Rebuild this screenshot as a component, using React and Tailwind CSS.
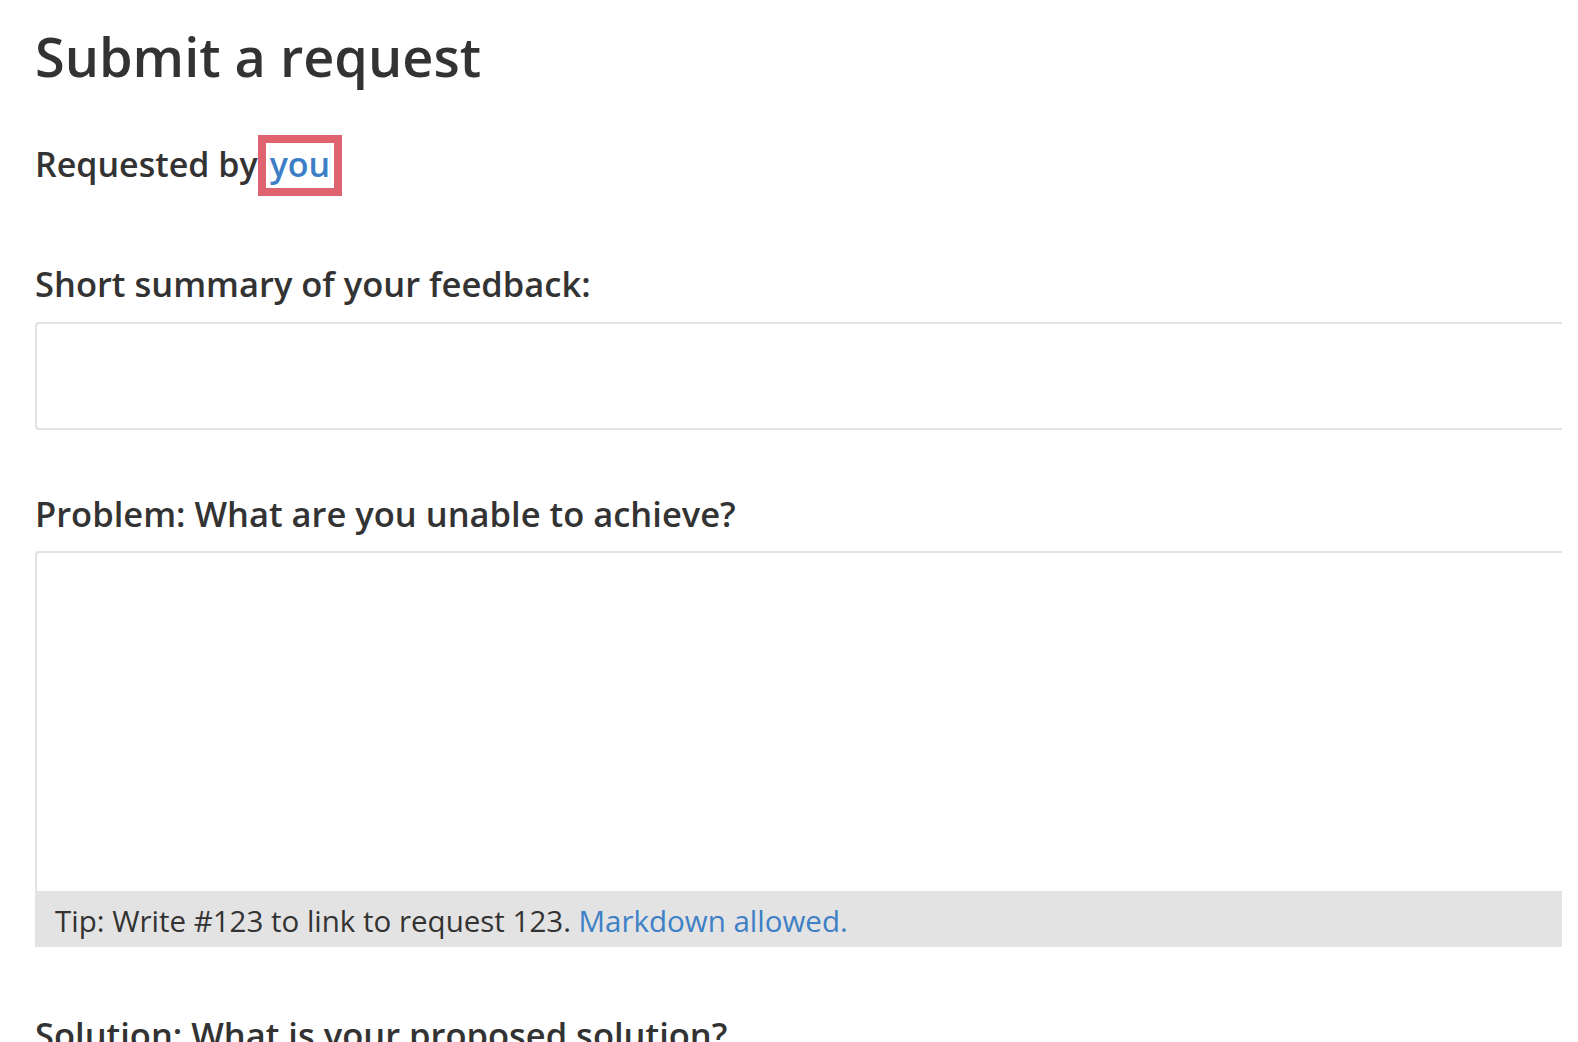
export default function App() {
  return (
    <div className="h-screen overflow-hidden bg-white pl-[35px] font-['Open_Sans','Noto_Sans',sans-serif] text-[#333]">
      <h1 className="pt-[29px] text-[54px] font-semibold leading-[54px]">Submit a request</h1>

      <p className="mt-[52px] text-[34px] font-semibold leading-[34px]">
        Requested by
        <span className="inline-block border-[8px] border-[#e0646f] px-[4px] pb-[3px] leading-[42px] text-[#3d7fc6]">
          you
        </span>
      </p>

      <label className="mt-[71px] block text-[34.5px] font-semibold leading-[34.5px]">
        Short summary of your feedback:
      </label>
      <div className="mt-[20px] h-[108px] w-[1527px] rounded-l-[4px] border-2 border-r-0 border-[#e2e2e2]" />

      <label className="mt-[67px] block text-[34.5px] font-semibold leading-[34.5px]">
        Problem: What are you unable to achieve?
      </label>
      <div className="mt-[20px] w-[1527px]">
        <div className="h-[340px] rounded-tl-[4px] border-2 border-r-0 border-b-0 border-[#e2e2e2]" />
        <div className="flex h-[56px] items-center bg-[#e3e3e3] pl-[20px] pt-[3px] text-[29.5px] leading-[29.5px]">
          <span>
            Tip: Write #123 to link to request 123.{' '}
            <a href="#" className="text-[#3d80c6]">
              Markdown allowed.
            </a>
          </span>
        </div>
      </div>

      <label className="mt-[71px] block text-[34.5px] font-semibold leading-[34.5px]">
        Solution: What is your proposed solution?
      </label>
    </div>
  )
}
